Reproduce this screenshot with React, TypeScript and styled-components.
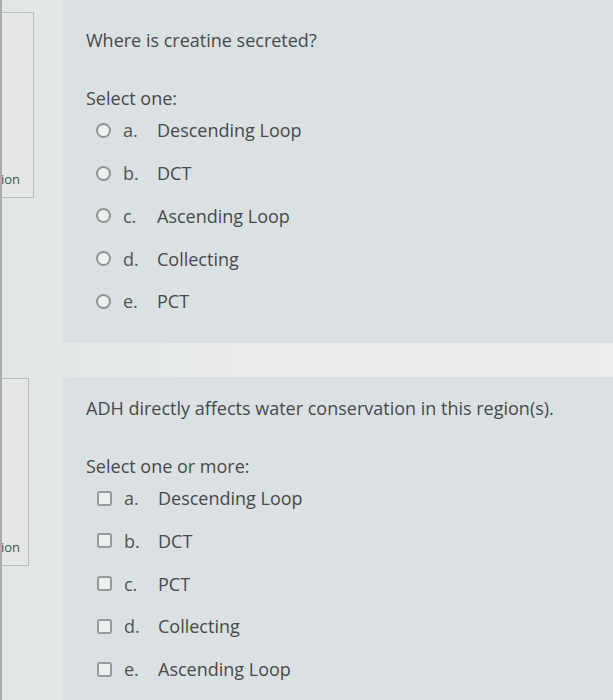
import React from "react";
import styled, { createGlobalStyle } from "styled-components";

const GlobalStyle = createGlobalStyle`
    html, body {
        margin: 0;
        padding: 0;
        background: #e7eae9;
        font-family: "Open Sans", "Noto Sans", sans-serif;
        color: #45494b;
        overflow: hidden;
    }
`;

type Question = {
    text: string;
    prompt: string;
    kind: "radio" | "checkbox";
    padTop: number;
    infoTop: number;
    infoHeight: number;
    infoWidth: number;
    options: { letter: string; label: string }[];
};

const questions: Question[] = [
    {
        text: "Where is creatine secreted?",
        prompt: "Select one:",
        kind: "radio",
        padTop: 28,
        infoTop: 12,
        infoHeight: 186,
        infoWidth: 32,
        options: [
            { letter: "a.", label: "Descending Loop" },
            { letter: "b.", label: "DCT" },
            { letter: "c.", label: "Ascending Loop" },
            { letter: "d.", label: "Collecting" },
            { letter: "e.", label: "PCT" },
        ],
    },
    {
        text: "ADH directly affects water conservation in this region(s).",
        prompt: "Select one or more:",
        kind: "checkbox",
        padTop: 19,
        infoTop: 1,
        infoHeight: 188,
        infoWidth: 27,
        options: [
            { letter: "a.", label: "Descending Loop" },
            { letter: "b.", label: "DCT" },
            { letter: "c.", label: "PCT" },
            { letter: "d.", label: "Collecting" },
            { letter: "e.", label: "Ascending Loop" },
        ],
    },
];

export default function App() {
    return (
        <>
            <GlobalStyle />
            <Page>
                {questions.map((q) => (
                    <QuestionRow key={q.text}>
                        <InfoBox $top={q.infoTop} $height={q.infoHeight} $width={q.infoWidth}>
                            <InfoLabel>ion</InfoLabel>
                        </InfoBox>
                        <Content $padTop={q.padTop}>
                            <QuestionText>{q.text}</QuestionText>
                            <Prompt>{q.prompt}</Prompt>
                            <Options>
                                {q.options.map((o) => (
                                    <Option key={o.letter}>
                                        {q.kind === "radio" ? <Radio /> : <Checkbox />}
                                        <Letter>{o.letter}</Letter>
                                        <Label>{o.label}</Label>
                                    </Option>
                                ))}
                            </Options>
                        </Content>
                    </QuestionRow>
                ))}
            </Page>
        </>
    );
}

const Page = styled.div`
    height: 700px;
    display: flex;
    flex-direction: column;
    gap: 34px;
    border-left: 2px solid #a9acac;
    background: linear-gradient(90deg, #e1e5e4 0%, #e9ecea 40%, #eceeed 100%);
`;

const QuestionRow = styled.div`
    display: flex;
    align-items: flex-start;
`;

const InfoBox = styled.div<{ $top: number; $height: number; $width: number }>`
    box-sizing: border-box;
    margin-top: ${(p) => p.$top}px;
    width: ${(p) => p.$width}px;
    height: ${(p) => p.$height}px;
    margin-right: ${(p) => 60 - p.$width}px;
    border: 1px solid #b9bdbc;
    border-left: none;
    background: #e4e7e6;
    display: flex;
    flex-direction: column;
    justify-content: flex-end;
    padding-bottom: 10px;
    overflow: hidden;
`;

const InfoLabel = styled.span`
    font-size: 13px;
    line-height: 16px;
    color: #4a4d4f;
    margin-left: -1px;
`;

const Content = styled.div<{ $padTop: number }>`
    flex: 1;
    background: #dbe1e2;
    padding: ${(p) => p.$padTop}px 0 20px 24px;
`;

const QuestionText = styled.div`
    font-size: 18px;
    line-height: 24px;
`;

const Prompt = styled.div`
    margin-top: 34px;
    font-size: 18px;
    line-height: 24px;
`;

const Options = styled.div`
    display: flex;
    flex-direction: column;
    margin-top: -1px;
    padding-left: 10px;
`;

const Option = styled.div`
    display: flex;
    align-items: center;
    height: 42.75px;
    font-size: 18px;
`;

const Radio = styled.span`
    box-sizing: border-box;
    width: 15px;
    height: 15px;
    border-radius: 50%;
    border: 2px solid #919495;
    background: #eef0f0;
    flex-shrink: 0;
`;

const Checkbox = styled.span`
    box-sizing: border-box;
    width: 15px;
    height: 15px;
    border-radius: 3px;
    border: 2px solid #979a9b;
    background: #eef0f0;
    flex-shrink: 0;
    margin-left: 1px;
`;

const Letter = styled.span`
    margin-left: 12px;
    width: 34px;
    color: #505456;
`;

const Label = styled.span`
    color: #45494b;
`;
